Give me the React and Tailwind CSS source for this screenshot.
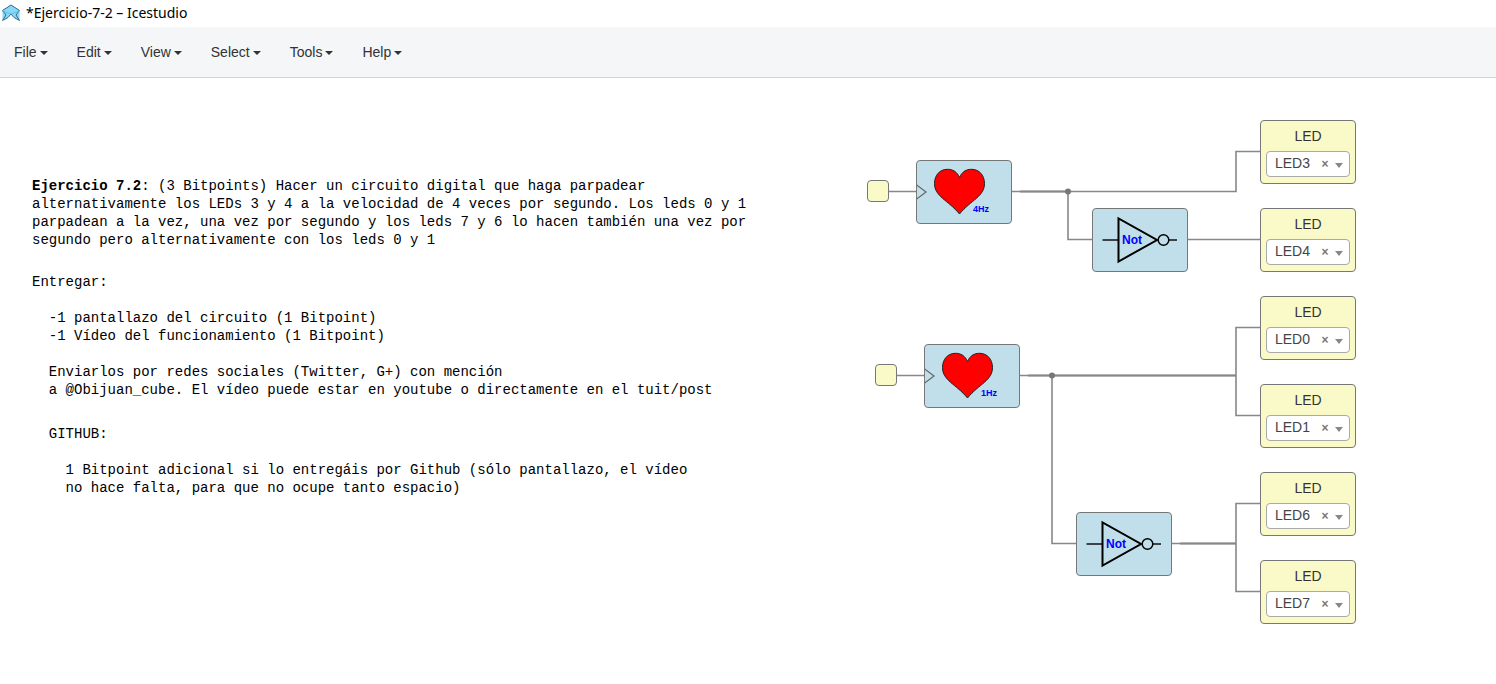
const MENUS = ["File", "Edit", "View", "Select", "Tools", "Help"];

const LEDS = [
  { id: "LED3", place: "left-[1260px] top-[42px]" },
  { id: "LED4", place: "left-[1260px] top-[130px]" },
  { id: "LED0", place: "left-[1260px] top-[218px]" },
  { id: "LED1", place: "left-[1260px] top-[306px]" },
  { id: "LED6", place: "left-[1260px] top-[394px]" },
  { id: "LED7", place: "left-[1260px] top-[482px]" },
];
const PINS = ["LED0", "LED1", "LED2", "LED3", "LED4", "LED5", "LED6", "LED7"];

function Logo() {
  return (
    <svg viewBox="2 1 20 18" className="h-[18px] w-5" aria-hidden="true">
      <path d="M11 2 L19.5 7 L19.5 17.5 L14 14.5 L11 11 L8 14.5 L2.5 17.5 L2.5 7 Z" fill="#8ad8f8" />
      <path d="M2.5 7.5 L11 2 L19.5 7.5 L16 12 L19.5 17.5 L14 14.5 M8 14.5 L2.5 17.5 L6 12 L2.5 7.5" fill="none" stroke="#2f6f8c" strokeWidth="1" />
      <path d="M8 14.5 L11 11 L14 14.5" fill="none" stroke="#2f6f8c" strokeWidth="1" />
      <path d="M2.5 8 L11 11 L19.5 8" fill="none" stroke="#5bb8e0" strokeWidth="0.8" />
    </svg>
  );
}

function Wires() {
  return (
    <svg className="absolute left-0 top-0 h-[606px] w-[1496px]" viewBox="0 0 1496 606" fill="none" stroke="#888888" strokeWidth="1.6" aria-hidden="true">
      <path d="M888 113.5H916M1012 113.5H1236V73.5H1260M1068 113.5V161.5H1092M1188 161.5H1260" />
      <path d="M896 297.5H924M1020 297.5H1236M1260 249.5H1236V337.5H1260M1052 297.5V465.5H1076" />
      <path d="M1172 465.5H1236M1260 425.5H1236V513.5H1260" />
      <path d="M1020 113.5H1068M1028 297.5H1236M1180 465.5H1236" strokeWidth="2" />
      <circle cx="1068" cy="113.5" r="3" fill="#777777" stroke="none" />
      <circle cx="1052" cy="297.5" r="3" fill="#777777" stroke="none" />
    </svg>
  );
}

function InputPort({ place }) {
  return <div className={`absolute ${place} h-[22px] w-[22px] rounded border border-[#777777] bg-[#fafac8]`} />;
}

function Block({ place, children }) {
  return <div className={`absolute ${place} h-16 w-24 rounded border border-[#777777] bg-[#c0dfeb]`}>{children}</div>;
}

function Heart({ place, rate }) {
  return (
    <Block place={place}>
      <svg viewBox="1 1 94 62" className="h-full w-full" role="img" aria-label={`Heart ${rate}`}>
        <path d="M0.5 25 L10 32 L0.5 39" fill="none" stroke="#666666" strokeWidth="1.2" />
        <path d="M43.5 17.5 C46 11.5 50.5 9.3 55.5 9.3 C63 9.3 68.5 15 68.5 23.5 C68.5 36.5 55 40 43.5 54 C32 40 18.5 36.5 18.5 23.5 C18.5 15 24 9.3 31.5 9.3 C36.5 9.3 41 11.5 43.5 17.5 Z" fill="#ff0000" stroke="#222222" strokeWidth="1" />
        <text x="57" y="52" fontFamily="Liberation Sans, sans-serif" fontWeight="bold" fontSize="9" fill="#0000ff">{rate}</text>
      </svg>
    </Block>
  );
}

function NotGate({ place }) {
  return (
    <Block place={place}>
      <svg viewBox="1 1 94 62" className="h-full w-full" role="img" aria-label="Not gate">
        <path d="M10.5 32H26M77 32H85" stroke="#111111" strokeWidth="1.3" />
        <path d="M26.5 10.5V53.5L65 32Z" fill="none" stroke="#000000" strokeWidth="2" />
        <circle cx="71.5" cy="32" r="5.3" fill="none" stroke="#000000" strokeWidth="1.5" />
        <text x="30" y="36" fontFamily="Liberation Sans, sans-serif" fontWeight="bold" fontSize="12" fill="#0000ff">Not</text>
      </svg>
    </Block>
  );
}

function LedBlock({ id, place }) {
  return (
    <div className={`absolute ${place} flex h-16 w-24 flex-col rounded border border-[#777777] bg-[#fafac8] px-[5px] pt-[5px]`}>
      <label htmlFor={id} className="text-center text-sm leading-5 text-[#333333]">LED</label>
      <div className="mt-[5px] flex h-[26px] items-center rounded border border-[#aaaaaa] bg-white pl-2 pr-1.5">
        <select id={id} defaultValue={id} className="mb-0.5 min-w-0 flex-1 appearance-none bg-transparent text-sm leading-5 text-[#444444] outline-none">
          {PINS.map((pin) => <option key={pin}>{pin}</option>)}
        </select>
        <button aria-label="Clear" className="w-3 text-xs font-bold leading-4 text-[#777777]">×</button>
        <svg viewBox="0 0 8 5" className="ml-1 mt-0.5 h-[5px] w-2" aria-hidden="true"><path d="M0 0H8L4 5Z" fill="#888888" /></svg>
      </div>
    </div>
  );
}

function Lines({ className, children }) {
  return (
    <div className={className}>
      {children.map((line, i) => <p key={i} className="min-h-[18px]">{line}</p>)}
    </div>
  );
}

const TASK = [
  <><strong>Ejercicio 7.2</strong>: (3 Bitpoints) Hacer un circuito digital que haga parpadear</>,
  "alternativamente los LEDs 3 y 4 a la velocidad de 4 veces por segundo. Los leds 0 y 1",
  "parpadean a la vez, una vez por segundo y los leds 7 y 6 lo hacen también una vez por",
  "segundo pero alternativamente con los leds 0 y 1",
];
const DELIVERY = [
  "Entregar:",
  "",
  "  -1 pantallazo del circuito (1 Bitpoint)",
  "  -1 Vídeo del funcionamiento (1 Bitpoint)",
  "",
  "  Enviarlos por redes sociales (Twitter, G+) con mención",
  "  a @Obijuan_cube. El vídeo puede estar en youtube o directamente en el tuit/post",
];
const GITHUB = [
  "  GITHUB:",
  "",
  "    1 Bitpoint adicional si lo entregáis por Github (sólo pantallazo, el vídeo",
  "    no hace falta, para que no ocupe tanto espacio)",
];

export default function App() {
  return (
    <div className="min-h-screen bg-white font-['Liberation_Sans',Arial,sans-serif]">
      <header>
        <div className="flex h-[27px] items-center gap-1 pb-0.5 pl-0.5">
          <Logo />
          <h1 className="font-['Noto_Sans',sans-serif] text-sm leading-5 text-black">*Ejercicio-7-2 – Icestudio</h1>
        </div>
        <nav className="flex h-[51px] items-center gap-[29px] border-b border-[#d4d7da] bg-[#f4f6f8] px-3.5">
          {MENUS.map((name) => (
            <button key={name} className="flex items-center gap-[3px] text-sm leading-5 text-[#333333]">
              {name}
              <svg viewBox="0 0 8 4" className="mt-0.5 h-1 w-2" aria-hidden="true"><path d="M0 0H8L4 4Z" fill="#333333" /></svg>
            </button>
          ))}
        </nav>
      </header>
      <main className="relative h-[606px] overflow-hidden">
        <article className="absolute left-8 top-[99px] whitespace-pre font-['Liberation_Mono',monospace] text-sm leading-[18px] text-black">
          <Lines>{TASK}</Lines>
          <Lines className="mt-6">{DELIVERY}</Lines>
          <Lines className="mt-[26px]">{GITHUB}</Lines>
        </article>
        <Wires />
        <InputPort place="left-[867px] top-[102px]" />
        <InputPort place="left-[875px] top-[286px]" />
        <Heart place="left-[916px] top-[82px]" rate="4Hz" />
        <Heart place="left-[924px] top-[266px]" rate="1Hz" />
        <NotGate place="left-[1092px] top-[130px]" />
        <NotGate place="left-[1076px] top-[434px]" />
        {LEDS.map((led) => <LedBlock key={led.id} {...led} />)}
      </main>
    </div>
  );
}
